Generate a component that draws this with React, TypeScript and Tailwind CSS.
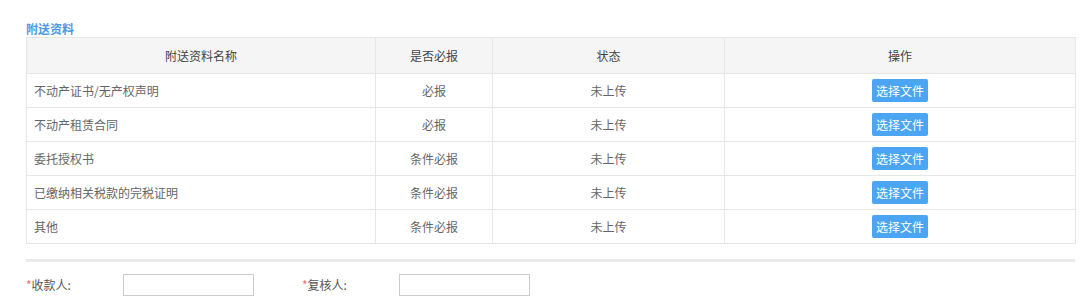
import React from 'react';

const rows = [
  { name: '不动产证书/无产权声明', required: '必报', status: '未上传' },
  { name: '不动产租赁合同', required: '必报', status: '未上传' },
  { name: '委托授权书', required: '条件必报', status: '未上传' },
  { name: '已缴纳相关税款的完税证明', required: '条件必报', status: '未上传' },
  { name: '其他', required: '条件必报', status: '未上传' },
];

export default function App() {
  return (
    <div
      className="w-[1080px] h-[299px] bg-white overflow-hidden pl-[26px] pr-[5px] pt-[21px] text-[12px] text-[#666]"
      style={{ fontFamily: '"Microsoft YaHei", "Noto Sans CJK SC", sans-serif' }}
    >
      {/* 标题 */}
      <div className="h-[16px] leading-[16px] text-[12px] font-bold text-[#4a9ae6]">附送资料</div>

      {/* 附送资料表格 */}
      <table className="w-[1049px] border-collapse table-fixed">
        <colgroup>
          <col className="w-[349px]" />
          <col className="w-[117px]" />
          <col className="w-[232px]" />
          <col className="w-[351px]" />
        </colgroup>
        <thead>
          <tr className="h-[36px] bg-[#f5f5f5] text-[#444]">
            <th className="border border-[#e6e6e6] font-normal">附送资料名称</th>
            <th className="border border-[#e6e6e6] font-normal">是否必报</th>
            <th className="border border-[#e6e6e6] font-normal">状态</th>
            <th className="border border-[#e6e6e6] font-normal">操作</th>
          </tr>
        </thead>
        <tbody>
          {rows.map((r) => (
            <tr key={r.name} className="h-[34px]">
              <td className="border border-[#e6e6e6] pl-[7px]">{r.name}</td>
              <td className="border border-[#e6e6e6] text-center">{r.required}</td>
              <td className="border border-[#e6e6e6] text-center">{r.status}</td>
              <td className="border border-[#e6e6e6] text-center">
                <button className="inline-flex items-center justify-center w-[56px] h-[23px] rounded-[2px] bg-[#4ba5f2] text-white text-[12px]">
                  选择文件
                </button>
              </td>
            </tr>
          ))}
        </tbody>
      </table>

      {/* 分隔线 */}
      <div className="mt-[15px] w-[1049px] h-[3px] bg-[#ebebeb]" />

      {/* 收款人 / 复核人 */}
      <div className="mt-[12px] flex items-center h-[22px]">
        <label className="w-[97px] text-[#555]">
          <span className="text-[#f56c6c]">*</span>收款人:
        </label>
        <input className="w-[131px] h-[22px] border border-[#ccc] outline-none" />
        <label className="ml-[48px] w-[97px] text-[#555]">
          <span className="text-[#f56c6c]">*</span>复核人:
        </label>
        <input className="w-[131px] h-[22px] border border-[#ccc] outline-none" />
      </div>
    </div>
  );
}
